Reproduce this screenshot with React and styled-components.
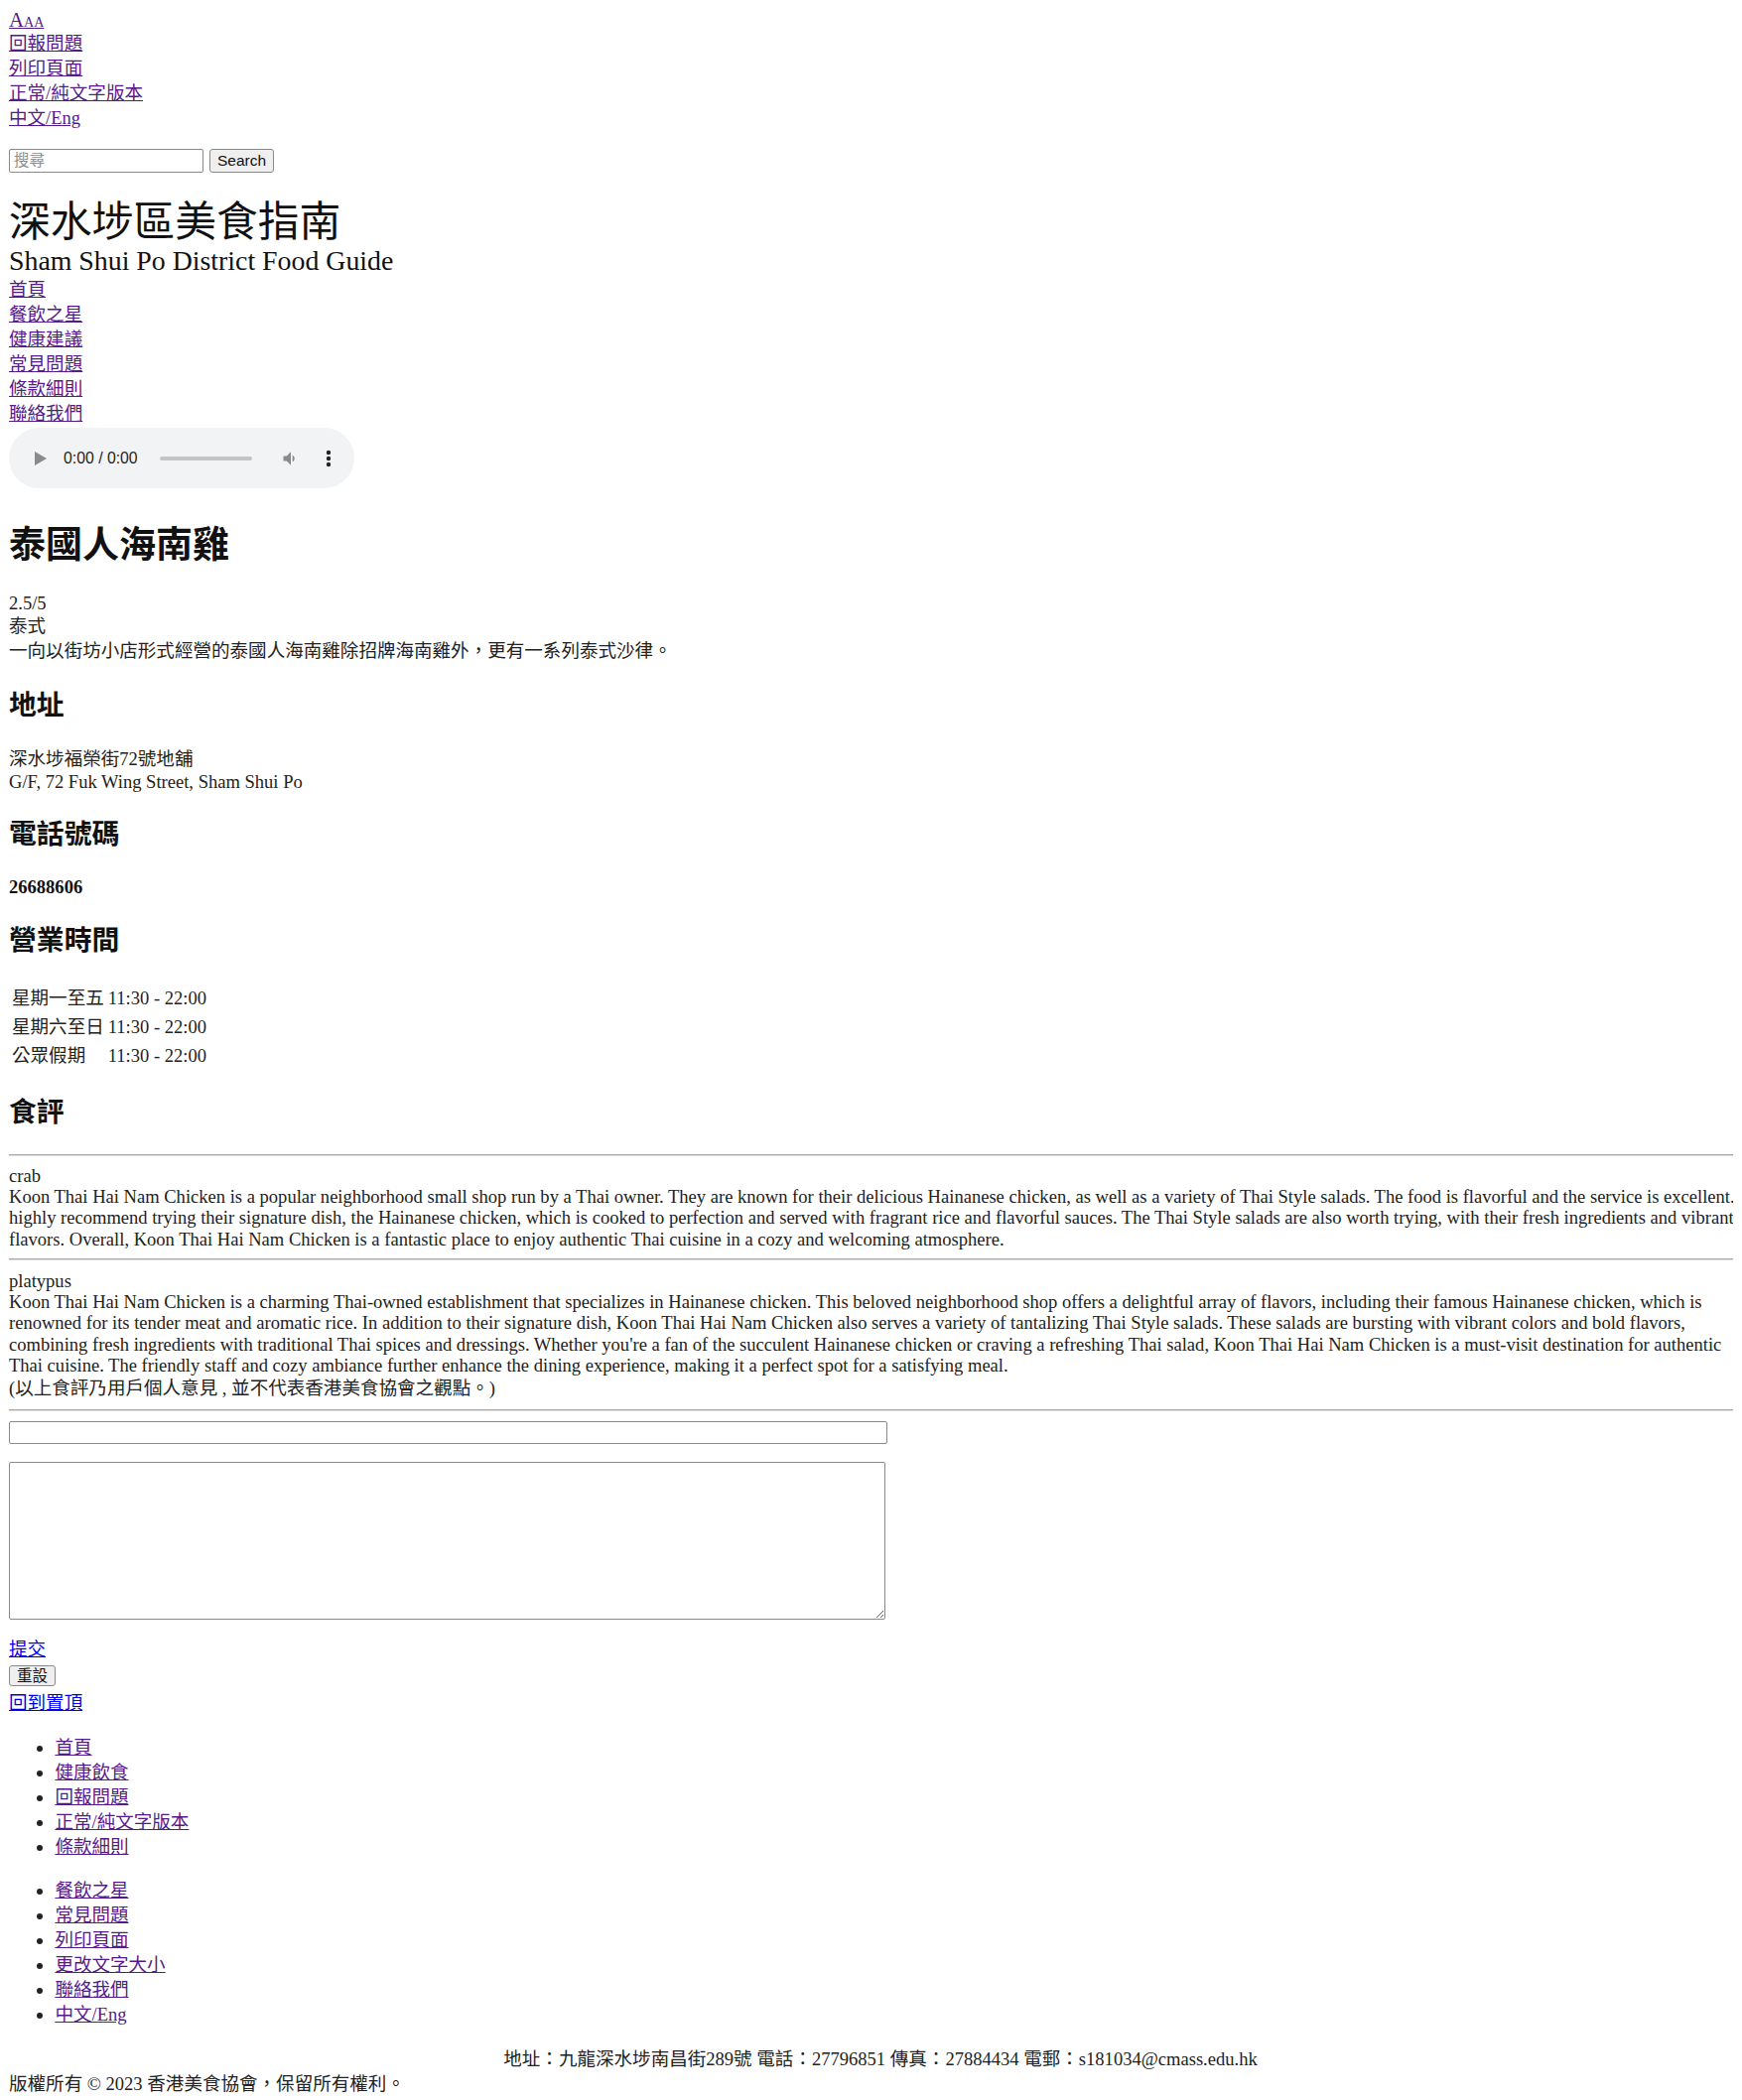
import React from "react";
import styled, { createGlobalStyle } from "styled-components";

const GlobalStyle = createGlobalStyle`
  html {
    overflow-x: hidden;
  }
  body {
    margin: 9px;
    font-family: "Liberation Serif", "Noto Sans CJK TC", serif;
    font-size: 18.56px;
    color: #222;
    background: #fff;
  }
  a {
    color: #551a8b;
  }
`;

// the original page runs a little wider than the captured window
const Page = styled.div`
  width: 1756px;
`;

// top utility links
const FontSizer = styled.a`
  display: block;
  width: max-content;
  height: 22px;
  line-height: 22px;
`;

const SizeA = styled.span`
  font-size: ${(props) => props.$size}px;
`;

const BlockLink = styled.a`
  display: block;
  width: max-content;
  line-height: 25px;
  color: ${(props) => (props.$fresh ? "#0000ee" : "#551a8b")};
`;

const SearchForm = styled.form`
  display: flex;
  align-items: center;
  gap: 6px;
  margin: 19px 0;
  height: 24px;
`;

const SearchInput = styled.input`
  box-sizing: border-box;
  width: 196px;
  height: 24px;
  padding: 1px 4px;
  border: 1px solid #8a8a8a;
  border-radius: 2px;
  font-family: "Liberation Sans", "Noto Sans CJK TC", sans-serif;
  font-size: 15.5px;

  &::placeholder {
    color: #8d8d8d;
  }
`;

const GreyButton = styled.button`
  box-sizing: border-box;
  height: ${(props) => props.$h || 24}px;
  padding: 0 7px;
  border: 1px solid #8a8a8a;
  border-radius: 3px;
  background: #efefef;
  color: #111;
  font-family: "Liberation Sans", "Noto Sans CJK TC", sans-serif;
  font-size: 15.5px;
  line-height: 1;
`;

const SiteTitle = styled.div`
  font-family: "Noto Sans CJK TC", sans-serif;
  font-size: 41.8px;
  line-height: 54px;
  color: #111;
`;

const SiteSubtitle = styled.div`
  font-size: 27.84px;
  line-height: 32px;
  color: #111;
`;

// fake audio element
const Player = styled.div`
  display: flex;
  align-items: center;
  box-sizing: border-box;
  width: 348px;
  height: 61px;
  margin: 2px 0 29.5px;
  padding-left: 26px;
  border-radius: 31px;
  background: #f1f3f4;
  font-family: "Liberation Sans", Arial, sans-serif;
  font-size: 15.8px;
  color: #1f1f1f;
`;

const TimeText = styled.span`
  margin-left: 17px;
`;

const Track = styled.div`
  width: 93px;
  height: 4px;
  margin-left: 22px;
  border-radius: 2px;
  background: #c4c4c4;
`;

const PlayerIcon = styled.svg`
  flex: none;
  margin-left: ${(props) => props.$gap || 0}px;
`;

const ShopName = styled.h1`
  margin: 25px 0 27.7px;
  font-family: "Noto Sans CJK TC", sans-serif;
  font-size: 37px;
  font-weight: 700;
  line-height: 48px;
  color: #111;
`;

const Line = styled.div`
  line-height: ${(props) => (props.$latin ? "21.3px" : "25px")};
`;

const SectionTitle = styled.h2`
  margin: 20.5px 0 25.5px;
  font-family: "Noto Sans CJK TC", sans-serif;
  font-size: 27.84px;
  font-weight: 700;
  line-height: 38px;
  color: #111;
`;

const Phone = styled.h4`
  margin: 24.7px 0 22px;
  font-size: 18.56px;
  font-weight: 700;
  line-height: 21.3px;
  color: #111;
`;

const HoursTable = styled.table`
  border-spacing: 2px;
  line-height: 25px;
  font-size: 18.56px;
  color: #222;

  td {
    padding: 1px;
  }
`;

const Divider = styled.hr`
  height: 0;
  margin: 9.3px 0;
  border: none;
  border-top: 1px solid #a8a8a8;
  border-bottom: 1px solid #dedede;
`;

const ReviewText = styled.div`
  line-height: 21.3px;
`;

const CommentInput = styled.input`
  display: block;
  box-sizing: border-box;
  width: 885px;
  height: 23px;
  margin: 0 0 18px;
  border: 1px solid #8a8a8a;
  border-radius: 2px;
`;

const CommentArea = styled.textarea`
  display: block;
  box-sizing: border-box;
  width: 883px;
  height: 159px;
  margin: 0 0 17.5px;
  border: 1px solid #8a8a8a;
  border-radius: 2px;
`;

const ResetRow = styled.div`
  margin: 2.5px 0 5.5px;
  height: 21px;
`;

const FooterList = styled.ul`
  margin: 19.5px 0;
  padding-left: 46.4px;
  line-height: 25px;
`;

const FooterAddress = styled.div`
  text-align: center;
  line-height: 25px;
`;

const Copyright = styled.div`
  line-height: 25px;
`;

const topLinks = ["回報問題", "列印頁面", "正常/純文字版本", "中文/Eng"];
const navLinks = ["首頁", "餐飲之星", "健康建議", "常見問題", "條款細則", "聯絡我們"];
const hours = [
  ["星期一至五", "11:30 - 22:00"],
  ["星期六至日", "11:30 - 22:00"],
  ["公眾假期", "11:30 - 22:00"],
];
const reviews = [
  {
    author: "crab",
    text: "Koon Thai Hai Nam Chicken is a popular neighborhood small shop run by a Thai owner. They are known for their delicious Hainanese chicken, as well as a variety of Thai Style salads. The food is flavorful and the service is excellent. I highly recommend trying their signature dish, the Hainanese chicken, which is cooked to perfection and served with fragrant rice and flavorful sauces. The Thai Style salads are also worth trying, with their fresh ingredients and vibrant flavors. Overall, Koon Thai Hai Nam Chicken is a fantastic place to enjoy authentic Thai cuisine in a cozy and welcoming atmosphere.",
  },
  {
    author: "platypus",
    text: "Koon Thai Hai Nam Chicken is a charming Thai-owned establishment that specializes in Hainanese chicken. This beloved neighborhood shop offers a delightful array of flavors, including their famous Hainanese chicken, which is renowned for its tender meat and aromatic rice. In addition to their signature dish, Koon Thai Hai Nam Chicken also serves a variety of tantalizing Thai Style salads. These salads are bursting with vibrant colors and bold flavors, combining fresh ingredients with traditional Thai spices and dressings. Whether you're a fan of the succulent Hainanese chicken or craving a refreshing Thai salad, Koon Thai Hai Nam Chicken is a must-visit destination for authentic Thai cuisine. The friendly staff and cozy ambiance further enhance the dining experience, making it a perfect spot for a satisfying meal.",
  },
];
const footerA = ["首頁", "健康飲食", "回報問題", "正常/純文字版本", "條款細則"];
const footerB = ["餐飲之星", "常見問題", "列印頁面", "更改文字大小", "聯絡我們", "中文/Eng"];

const AudioBar = () => (
  <Player>
    <PlayerIcon width="12" height="14" viewBox="0 0 12 14">
      <path d="M0 0L12 7L0 14Z" fill="#8a8a8a" />
    </PlayerIcon>
    <TimeText>0:00 / 0:00</TimeText>
    <Track />
    <PlayerIcon $gap={29} width="20" height="20" viewBox="0 0 24 24">
      <path d="M3 9v6h4l5 5V4L7 9H3z" fill="#8a8a8a" />
      <path d="M16.5 12c0-1.77-1.02-3.29-2.5-4.03v8.05c1.48-.73 2.5-2.250 2.5-4.02z" fill="#8a8a8a" />
    </PlayerIcon>
    <PlayerIcon $gap={25} width="6" height="18" viewBox="0 0 6 18">
      <circle cx="3" cy="3" r="2.2" fill="#222" />
      <circle cx="3" cy="9" r="2.2" fill="#222" />
      <circle cx="3" cy="15" r="2.2" fill="#222" />
    </PlayerIcon>
  </Player>
);

const App = () => {
  return (
    <Page>
      <GlobalStyle />
      <FontSizer href="#">
        <SizeA $size={20.8}>A</SizeA>
        <SizeA $size={14}>A</SizeA>
        <SizeA $size={14}>A</SizeA>
      </FontSizer>
      {topLinks.map((label) => (
        <BlockLink key={label} href="#">
          {label}
        </BlockLink>
      ))}
      <SearchForm onSubmit={(e) => e.preventDefault()}>
        <SearchInput placeholder="搜尋" />
        <GreyButton type="submit">Search</GreyButton>
      </SearchForm>

      <SiteTitle>深水埗區美食指南</SiteTitle>
      <SiteSubtitle>Sham Shui Po District Food Guide</SiteSubtitle>
      {navLinks.map((label) => (
        <BlockLink key={label} href="#">
          {label}
        </BlockLink>
      ))}
      <AudioBar />

      <ShopName>泰國人海南雞</ShopName>
      <Line $latin>2.5/5</Line>
      <Line>泰式</Line>
      <Line>一向以街坊小店形式經營的泰國人海南雞除招牌海南雞外，更有一系列泰式沙律。</Line>

      <SectionTitle>地址</SectionTitle>
      <Line>深水埗福榮街72號地舖</Line>
      <Line $latin>G/F, 72 Fuk Wing Street, Sham Shui Po</Line>

      <SectionTitle>電話號碼</SectionTitle>
      <Phone>26688606</Phone>

      <SectionTitle>營業時間</SectionTitle>
      <HoursTable>
        <tbody>
          {hours.map(([day, time]) => (
            <tr key={day}>
              <td>{day}</td>
              <td>{time}</td>
            </tr>
          ))}
        </tbody>
      </HoursTable>

      <SectionTitle>食評</SectionTitle>
      <Divider />
      {reviews.map((r, i) => (
        <React.Fragment key={r.author}>
          <ReviewText>{r.author}</ReviewText>
          <ReviewText>{r.text}</ReviewText>
          {i === 0 && <Divider />}
        </React.Fragment>
      ))}
      <Line>(以上食評乃用戶個人意見 , 並不代表香港美食協會之觀點。)</Line>
      <Divider />

      <form onSubmit={(e) => e.preventDefault()}>
        <CommentInput />
        <CommentArea />
        <BlockLink $fresh href="#">
          提交
        </BlockLink>
        <ResetRow>
          <GreyButton type="reset" $h={21}>
            重設
          </GreyButton>
        </ResetRow>
      </form>
      <BlockLink $fresh href="#">
        回到置頂
      </BlockLink>

      <FooterList>
        {footerA.map((label) => (
          <li key={label}>
            <a href="#">{label}</a>
          </li>
        ))}
      </FooterList>
      <FooterList>
        {footerB.map((label) => (
          <li key={label}>
            <a href="#">{label}</a>
          </li>
        ))}
      </FooterList>

      <FooterAddress>
        地址：九龍深水埗南昌街289號 電話：27796851 傳真：27884434 電郵：s181034@cmass.edu.hk
      </FooterAddress>
      <Copyright>版權所有 © 2023 香港美食協會，保留所有權利。</Copyright>
    </Page>
  );
};

export default App;
